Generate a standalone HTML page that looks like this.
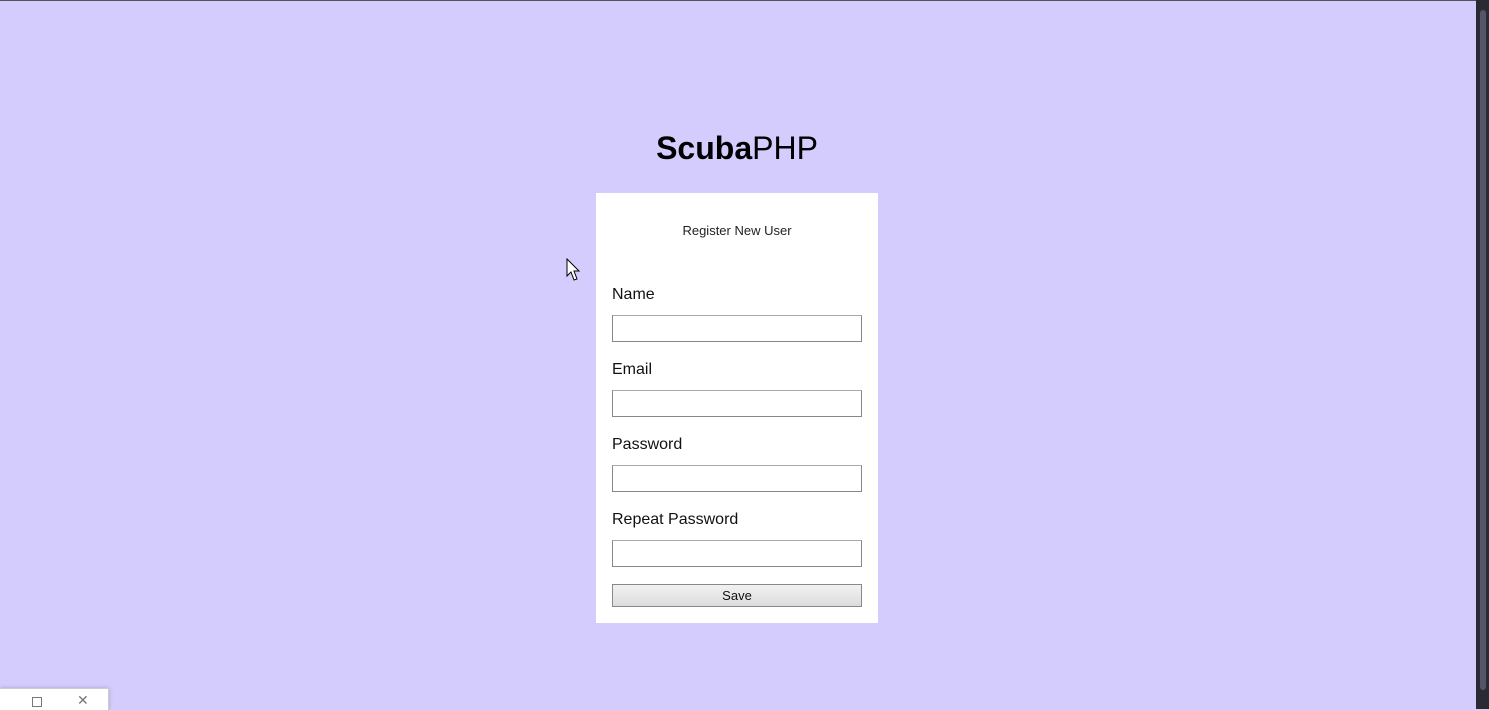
<!DOCTYPE html>
<html><head><style>
body{margin:0;width:1489px;height:709px;background:#d4ccfc;font-family:"Liberation Sans",sans-serif;position:relative;overflow:hidden}
.a{position:absolute}
h1{position:absolute;left:0;width:1474px;top:128px;margin:0;text-align:center;font-size:32px;font-weight:normal;color:#000;line-height:40px}
.card{left:596px;top:193px;width:282px;height:430px;background:#fff}
.lbl{left:612px;font-size:16px;color:#111}
.inp{left:612px;width:248px;height:25px;border:1px solid #888;border-top-color:#aaa;background:#fff}
.btn{left:612px;top:584px;width:248px;height:21px;border:1px solid #888;background:linear-gradient(#f2f2f2,#dcdcdc);font-size:13px;text-align:center;line-height:21px;color:#111}
</style></head><body>
<div class="a" style="left:0;top:0;width:1489px;height:1px;background:#555"></div>
<h1><b>Scuba</b>PHP</h1>
<div class="a card"></div>
<div class="a" style="left:596px;width:282px;top:223px;text-align:center;font-size:13px;color:#222">Register New User</div>
<div class="a lbl" style="top:286px">Name</div>
<div class="a inp" style="top:315px"></div>
<div class="a lbl" style="top:361px">Email</div>
<div class="a inp" style="top:390px"></div>
<div class="a lbl" style="top:436px">Password</div>
<div class="a inp" style="top:465px"></div>
<div class="a lbl" style="top:511px">Repeat Password</div>
<div class="a inp" style="top:540px"></div>
<div class="a btn">Save</div>
<svg class="a" style="left:566px;top:258px" width="16" height="24" viewBox="0 0 16 24"><path d="M1 1 L1 18 L5 14 L8 22 L11 21 L8 13 L13 13 Z" fill="#fff" stroke="#000" stroke-width="1"/></svg>
<div class="a" style="left:1476px;top:0;width:13px;height:709px;background:#2a2a35"></div>
<div class="a" style="left:1480px;top:10px;width:6px;height:680px;background:#55556a;border-radius:3px"></div>
<div class="a" style="left:0;top:688px;width:108px;height:21px;background:#fff;border-top:1px solid #ccc;border-right:1px solid #ccc;box-shadow:0 0 4px rgba(0,0,0,.2)"></div>
<div class="a" style="left:32px;top:697px;width:8px;height:8px;border:1px solid #777"></div>
<div class="a" style="left:77px;top:692px;font-size:14px;color:#777">✕</div>
</body></html>
